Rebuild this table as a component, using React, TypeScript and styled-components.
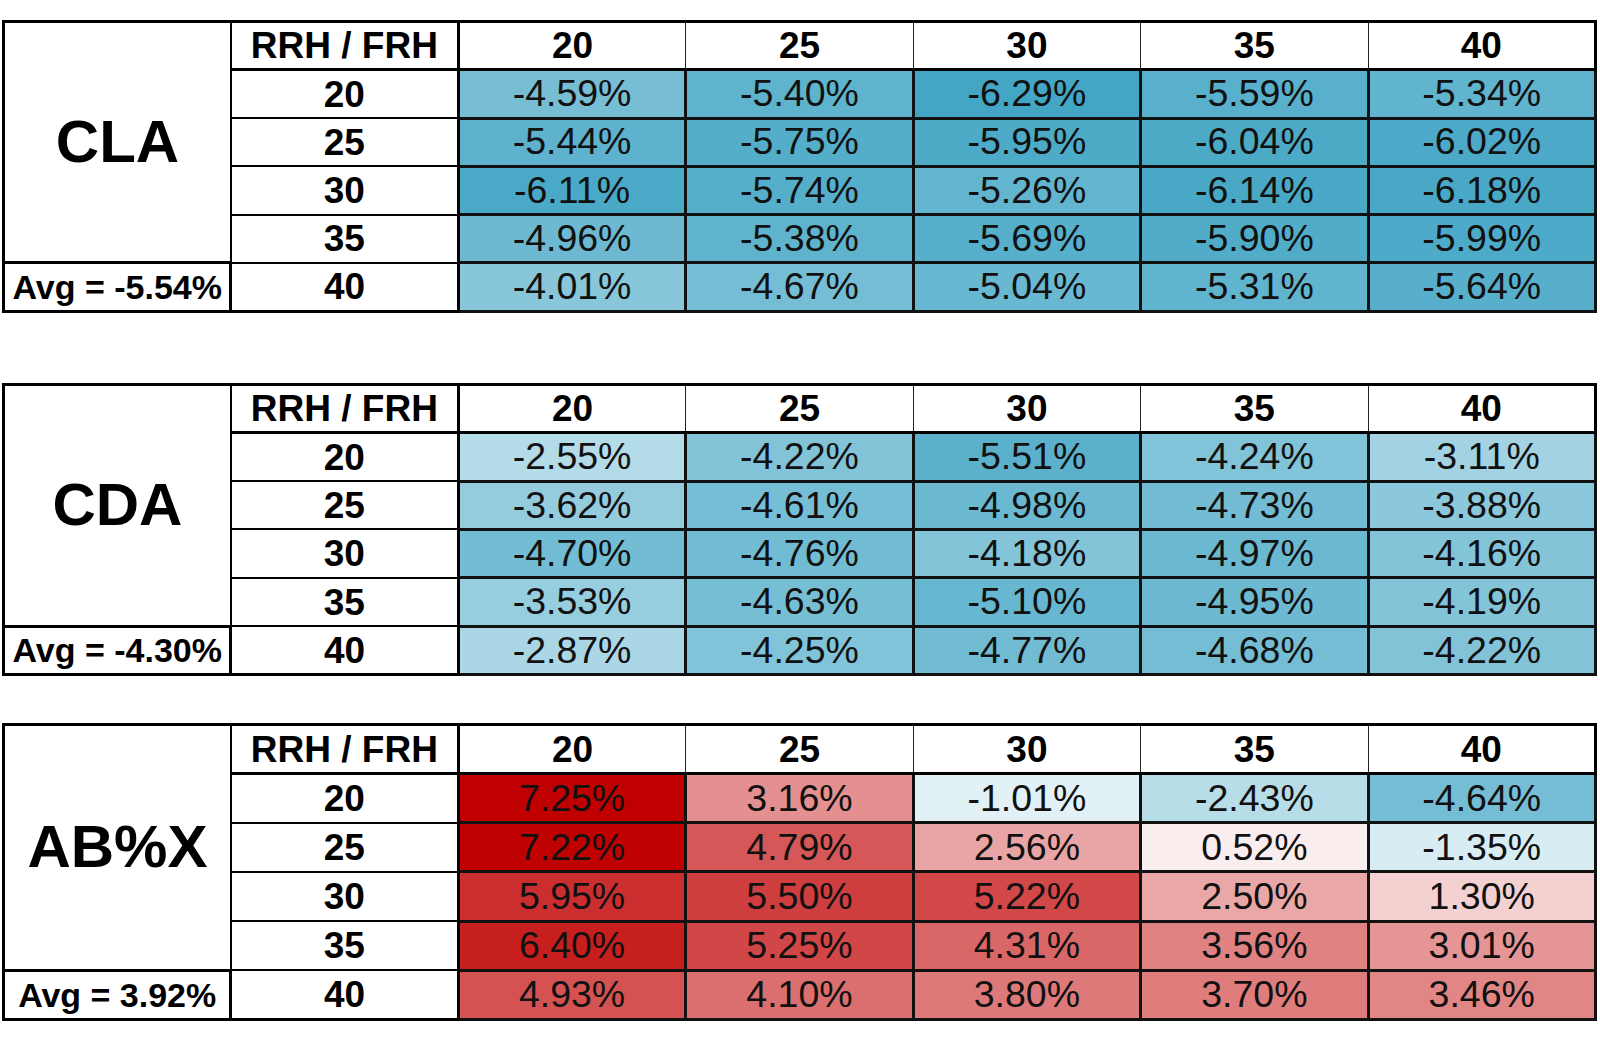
import React from "react";
import styled, { createGlobalStyle } from "styled-components";

const GlobalStyle = createGlobalStyle`
  html, body {
    margin: 0;
    padding: 0;
    background: #ffffff;
  }
  body {
    font-family: "Liberation Sans", Arial, sans-serif;
    color: #000;
  }
`;

const Page = styled.div`
  display: flex;
  flex-direction: column;
  padding: 20px 0 0 2px;
  width: 1600px;
  box-sizing: border-box;
`;

const Grid = styled.table<{ $gap: number }>`
  border-collapse: collapse;
  table-layout: fixed;
  width: 1595px;
  margin-top: ${(p) => p.$gap}px;
  border: 3px solid #000;
  font-family: "Liberation Sans", Arial, sans-serif;
`;

const Row = styled.tr<{ $h: number }>`
  height: ${(p) => p.$h}px;
`;

const LabelCell = styled.td`
  border: 3px solid #000;
  border-right-width: 2px;
  text-align: center;
  vertical-align: middle;
  font-weight: 700;
  font-size: 60px;
  line-height: 1;
  padding: 0;
  background: #fff;
`;

const AvgCell = styled.td`
  border: 3px solid #000;
  text-align: center;
  vertical-align: middle;
  font-weight: 700;
  font-size: 34px;
  line-height: 1;
  padding: 0;
  white-space: nowrap;
  background: #fff;
`;

const CornerCell = styled.td`
  border-bottom: 3px solid #000;
  border-right: 3px solid #000;
  border-left: 2px solid #000;
  text-align: center;
  vertical-align: middle;
  font-weight: 700;
  font-size: 37px;
  line-height: 1;
  padding: 0;
  white-space: nowrap;
  background: #fff;
`;

const ColHead = styled.td`
  border-bottom: 3px solid #000;
  border-left: 1px solid #222;
  text-align: center;
  vertical-align: middle;
  font-weight: 700;
  font-size: 37px;
  line-height: 1;
  padding: 0;
  background: #fff;
`;

const RowHead = styled.td<{ $last?: boolean }>`
  border-bottom: ${(p) => (p.$last ? "3px" : "2px")} solid #000;
  border-right: 3px solid #000;
  border-left: 2px solid #000;
  text-align: center;
  vertical-align: middle;
  font-weight: 700;
  font-size: 37px;
  line-height: 1;
  padding: 0;
  background: #fff;
`;

const DataCell = styled.td<{ $bg: string }>`
  border: 3px solid #111;
  text-align: center;
  vertical-align: middle;
  font-weight: 400;
  font-size: 37.5px;
  line-height: 1;
  padding: 0;
  color: #111;
  background: ${(p) => p.$bg};
`;

type TableData = {
  name: string;
  avg: string;
  gap: number;
  rowH: number;
  rows: number[][];
};

const heads = [20, 25, 30, 35, 40];

const mix = (a: number[], t: number) => {
  const c = a.map((v) => Math.round(255 - (255 - v) * t));
  return `rgb(${c[0]}, ${c[1]}, ${c[2]})`;
};

const colorFor = (v: number) => {
  if (v < 0) {
    const t = Math.min(1, Math.abs(v) / 6.3);
    return mix([68, 166, 197], t);
  }
  const t = Math.min(1, v / 7.25);
  return mix([192, 0, 0], t);
};

const fmt = (v: number) => `${v.toFixed(2)}%`;

const tables: TableData[] = [
  {
    name: "CLA",
    avg: "Avg = -5.54%",
    gap: 0,
    rowH: 48.3,
    rows: [
      [-4.59, -5.4, -6.29, -5.59, -5.34],
      [-5.44, -5.75, -5.95, -6.04, -6.02],
      [-6.11, -5.74, -5.26, -6.14, -6.18],
      [-4.96, -5.38, -5.69, -5.9, -5.99],
      [-4.01, -4.67, -5.04, -5.31, -5.64],
    ],
  },
  {
    name: "CDA",
    avg: "Avg = -4.30%",
    gap: 70,
    rowH: 48.4,
    rows: [
      [-2.55, -4.22, -5.51, -4.24, -3.11],
      [-3.62, -4.61, -4.98, -4.73, -3.88],
      [-4.7, -4.76, -4.18, -4.97, -4.16],
      [-3.53, -4.63, -5.1, -4.95, -4.19],
      [-2.87, -4.25, -4.77, -4.68, -4.22],
    ],
  },
  {
    name: "AB%X",
    avg: "Avg = 3.92%",
    gap: 47,
    rowH: 49.1,
    rows: [
      [7.25, 3.16, -1.01, -2.43, -4.64],
      [7.22, 4.79, 2.56, 0.52, -1.35],
      [5.95, 5.5, 5.22, 2.5, 1.3],
      [6.4, 5.25, 4.31, 3.56, 3.01],
      [4.93, 4.1, 3.8, 3.7, 3.46],
    ],
  },
];

const HeatTable: React.FC<{ data: TableData }> = ({ data }) => (
  <Grid $gap={data.gap}>
    <tbody>
      <Row $h={data.rowH}>
        <LabelCell rowSpan={5}>{data.name}</LabelCell>
        <CornerCell>RRH / FRH</CornerCell>
        {heads.map((h) => (
          <ColHead key={h}>{h}</ColHead>
        ))}
      </Row>
      {data.rows.map((vals, i) => (
        <Row key={i} $h={data.rowH}>
          {i === 4 && <AvgCell>{data.avg}</AvgCell>}
          <RowHead $last={i === 4}>{heads[i]}</RowHead>
          {vals.map((v, j) => (
            <DataCell key={j} $bg={colorFor(v)}>
              {fmt(v)}
            </DataCell>
          ))}
        </Row>
      ))}
    </tbody>
  </Grid>
);

export default function App() {
  return (
    <>
      <GlobalStyle />
      <Page>
        {tables.map((t) => (
          <HeatTable key={t.name} data={t} />
        ))}
      </Page>
    </>
  );
}
